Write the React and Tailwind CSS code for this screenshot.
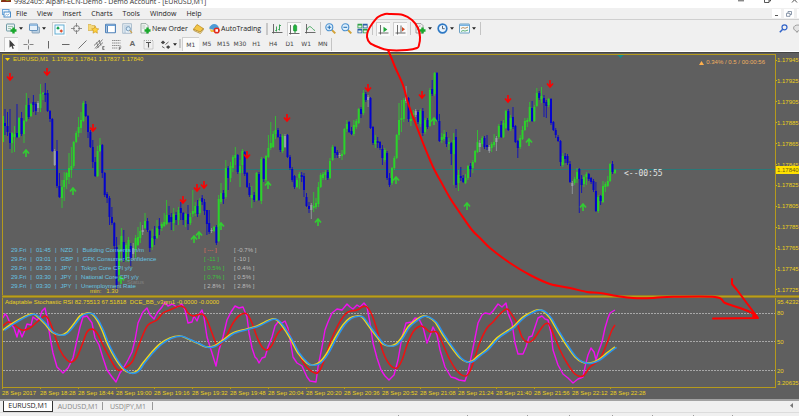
import { Fragment } from "react";
import clsx from "clsx";

const menus = ["File", "View", "Insert", "Charts", "Tools", "Window", "Help"];
const timeframes = ["M1", "M5", "M15", "M30", "H1", "H4", "D1", "W1", "MN"];
const tabs = ["EURUSD,M1", "AUDUSD,M1", "USDJPY,M1"];

const prices = [
  "1.17945", "1.17925", "1.17905", "1.17885", "1.17865", "1.17845",
  "1.17825", "1.17805", "1.17785", "1.17765", "1.17745", "1.17725",
];

const times = [
  "2017", "18:28", "18:44", "19:00", "19:16", "19:32", "19:48", "20:04", "20:20",
  "20:36", "20:52", "21:08", "21:24", "21:40", "21:56", "22:12", "22:28",
];

const news = [
  { time: "01:45", currency: "NZD", title: "Building Consents m/m", actual: "[ --- ]", previous: "[ -0.7% ]", tone: "text-[#e5705a]" },
  { time: "03:01", currency: "GBP", title: "GFK Consumer Confidence", actual: "[ -11 ]", previous: "[ -10 ]", tone: "text-[#3cc43c]" },
  { time: "03:30", currency: "JPY", title: "Tokyo Core CPI y/y", actual: "[ 0.5% ]", previous: "[ 0.4% ]", tone: "text-[#3cc43c]" },
  { time: "03:30", currency: "JPY", title: "National Core CPI y/y", actual: "[ 0.7% ]", previous: "[ 0.5% ]", tone: "text-[#3cc43c]" },
  { time: "03:30", currency: "JPY", title: "Unemployment Rate", actual: "[ 2.8% ]", previous: "[ 2.8% ]", tone: "text-[#bcbcbc]" },
];

// x high top bottom low colour (g = up, b = down, w = doji)
const candleData = `
3 116 116 142 142 g|5 109 123 126 135 b|7.5 112 126 132 136 b|10 109 133 143 149 b|12 132 133 143 153 g|14.5 126 134 137 152 g
17 104 133 137 138 b|19 117 118 137 138 g|21.6 112 118 134 136 b|24 120 121 134 143 g|26.3 93 105 121 122 g|28.7 98 105 117 119 b
31 103 104 116 117 g|33.4 95 102 105 112 b|35.8 102 104 111 115 b|38 101 103 108 112 w|40.5 84 94 108 112 g|43 92 93 94 100 g
45.3 83 93 95 102 b|47.6 90 93 111 112 b|50 110 111 119 122 b|52.3 118 119 151 152 b|54.7 149 151 165 166 w|57 140 151 186 188 b
59.4 173 186 197 198 b|62 180 187 198 208 g|64.2 172 180 187 201 g|66.6 172 173 180 189 g|69 153 168 177 184 g|71.4 147 166 170 178 g
73.7 141 142 166 168 g|76.2 131 133 142 143 g|78.6 117 127 133 137 g|81 112 120 128 133 g|83.3 101 103 121 122 g|85.7 101 104 116 117 b
88 115 116 132 138 b|90.4 130 132 147 148 b|92.8 140 147 162 168 b|95.2 157 162 176 177 b|97.6 146 151 176 177 g|100 138 145 151 152 g
102.3 144 145 173 178 b|104.7 172 173 195 197 b|107.1 192 194 198 203 b|109.5 196 198 217 225 b|111.9 207 217 223 225 b|114.3 222 223 246 250 b
116.6 237 247 285 290 b|119 245 250 275 282 g|121.4 228 236 250 262 g|123.8 230 242 260 262 b|126.1 243 245 260 262 g|128.5 237 240 252 262 g
130.8 243 246 258 266 b|133.2 243 248 254 260 w|135.6 235 238 250 258 g|138 227 237 245 246 g|140.3 222 231 238 243 g|142.7 225 230 232 235 w
145 213 221 228 229 g|147.5 218 221 230 232 b|149.8 230 231 248 252 b|152.2 229 238 247 250 g|154.6 226 236 239 245 b|157 220 228 238 239 g
159.4 218 226 229 235 b|161.8 222 224 228 231 g|164.2 213 222 226 227 g|166.6 200 215 224 225 g|169 206 215 222 223 b|171.3 213 217 222 230 b
173.7 208 214 223 231 g|176.1 212 215 220 225 b|178.5 207 210 220 225 g|180.8 202 208 213 220 b|183.2 212 213 220 225 b|185.6 213 214 220 227 g
188 205 214 224 230 b|190.4 213 217 223 225 g|192.8 190 211 214 217 g|195.2 202 206 213 216 g|197.5 200 206 214 217 b|199.8 198 201 213 215 g
202.2 195 198 202 205 b|204.5 199 202 211 215 b|206.9 210 210 224 235 b|209.2 210 223 232 234 b|211.6 228 230 231 233 w|214 226 227 231 232 g
216.4 225 227 243 245 b|218.7 195 199 241 242 g|221 183 193 202 204 g|223.4 190 193 199 204 b|225.8 160 168 197 199 g|228.2 166 168 178 190 b
230.5 162 166 178 182 g|232.9 155 157 168 172 g|235.3 147 155 158 165 g|237.7 154 155 172 174 b|240 160 166 173 187 g|242.4 149 151 165 173 g
244.7 151 152 174 176 b|247.1 172 173 187 188 b|249.4 183 187 195 197 b|251.8 186 195 198 208 g|254.2 192 195 200 202 b|256.5 172 173 200 201 g
259 172 174 200 201 b|261.3 157 159 201 204 g|263.7 158 159 179 182 b|266 155 156 180 182 g|268.4 135 148 157 158 g|270.8 122 143 148 150 g
273.2 131 134 147 148 g|275.5 116 130 134 139 g|278 128 130 137 138 b|280.3 134 137 150 152 b|282.7 134 136 151 153 g|285 134 136 147 148 w
287.5 134 135 157 158 b|290 155 157 168 170 b|292.2 167 169 180 182 b|294.5 175 176 187 189 b|297 178 180 187 188 g|299.3 172 174 178 189 g
301.7 172 175 177 182 b|304 173 176 190 197 b|306.5 193 197 206 207 b|309 202 206 209 213 b|311.3 203 205 210 219 w|313.7 192 206 208 212 g
316 198 203 207 209 g|318.4 182 187 204 207 g|320.7 173 175 187 188 g|323 172 174 178 180 g|325.4 170 172 175 180 g|327.8 170 172 178 180 b
330 158 161 178 179 g|332.6 145 147 160 161 g|335 146 147 153 158 b|337.3 150 152 155 158 b|339.7 153 155 156 158 w|342 150 154 156 160 g
344.4 128 129 154 155 g|346.8 120 124 129 132 g|349.1 121 122 132 133 b|351.5 127 131 134 135 b|353.9 120 125 134 136 g|356.3 119 121 127 129 g
358.7 108 109 123 124 g|361 107 109 114 118 b|363.4 90 93 113 115 g|365.8 92 94 100 102 b|368.1 95 97 100 107 w|370.5 97 98 128 129 b
373 126 127 143 145 b|375.3 135 140 144 148 g|377.7 137 141 143 148 b|380 141 142 148 150 b|382.4 145 149 158 165 b|384.8 148 150 160 162 g
387.1 151 153 178 180 b|389.5 173 178 185 187 b|392 167 168 183 185 g|394.3 156 158 168 170 g|396.7 134 135 158 159 g|399 103 120 135 140 g
401.4 100 118 120 132 g|403.8 98 100 119 122 g|406.1 86 97 101 103 w|408.5 97 98 119 122 b|410.9 112 119 121 126 g|413.3 110 113 117 120 g
415.7 109 111 115 117 w|418 110 112 122 124 b|420.4 109 111 124 127 g|422.8 108 111 133 136 b|425.1 118 120 132 134 g|427.5 118 120 127 129 b
429.9 88 90 126 127 g|432.2 80 89 94 96 b|434.6 72 73 94 96 g|437 72 73 121 122 b|439.4 114 121 141 142 b|441.8 133 137 140 143 g
444.1 130 134 139 141 g|446.5 132 137 144 147 b|448.9 138 142 144 150 g|451.3 142 143 154 165 b|453.7 133 140 154 185 g|456 129 137 185 188 b
458.5 170 175 183 191 g|460.8 167 176 178 181 b|463.2 175 178 182 183 b|465.5 174 178 183 184 g|468 165 166 178 180 g|470.4 163 166 169 177 b
472.8 160 162 168 173 g|475.1 150 151 162 163 g|477.5 130 142 152 153 g|479.8 140 143 147 152 w|482.2 136 138 144 147 g|484.5 136 138 147 149 b
487 135 145 147 150 b|489.3 145 147 151 153 w|491.7 142 144 148 152 g|494.1 134 142 145 147 g|496.4 136 138 142 151 w|498.8 124 126 137 139 g
501.2 121 125 137 138 b|503.5 120 123 137 138 g|505.9 110 111 128 129 g|508.3 109 111 130 131 b|510.7 115 118 129 131 g|513 107 117 127 129 b
515.4 125 126 142 143 b|517.8 140 141 148 158 b|520.2 135 138 147 149 g|522.5 126 130 139 140 g|524.9 118 121 130 131 g|527.3 118 120 122 127 g
529.7 102 107 121 122 g|532.1 101 108 121 122 b|534.4 105 107 121 122 g|536.8 88 93 106 107 g|539.2 91 93 98 100 b|541.5 87 96 99 103 g
544 95 98 103 117 b|546.3 100 102 106 118 b|548.6 98 99 105 107 g|551 98 99 123 125 b|553.4 121 122 130 131 b|555.7 128 130 135 138 b
558.1 135 137 141 142 b|560.5 140 141 162 166 b|562.8 153 156 165 167 g|565.2 153 156 159 163 b|567.5 154 156 163 165 b|570 161 164 182 183 b
572.3 181 183 186 194 w|574.6 177 179 183 185 g|577 168 172 179 183 g|579.3 168 169 179 213 b|581.6 175 179 185 193 b|584 175 177 184 187 g
586.4 172 174 177 185 g|588.8 173 174 179 181 b|591.1 177 178 182 184 b|593.5 179 181 190 192 b|595.9 182 191 211 212 b|598.2 195 197 211 213 g
600.6 195 196 201 205 b|603 181 186 202 203 g|605.4 182 184 187 192 g|607.8 176 181 186 187 g|610.1 163 164 181 182 g|612.5 161 164 172 174 b
615 169 170 173 174 g`;

const candles = candleData
  .trim()
  .split(/[|\n]/)
  .map((row) => {
    const [x, high, top, bottom, low, kind] = row.split(" ");
    return { x: +x, high: +high, top: +top, bottom: +bottom, low: +low, kind };
  });

const candleColors = { g: "#2bd32b", b: "#0404cc", w: "#9aa0a8" };

const sellSignals = [[10, 77], [47, 72], [93, 128], [183, 200], [197, 188], [204, 185], [247, 155], [287, 118], [368, 88], [422, 95], [508, 99], [550, 84]];
const buySignals = [[26, 153], [73, 191], [121, 280], [194, 239], [199, 235], [221, 226], [268, 185], [318, 222], [396, 180], [434, 121], [467, 206], [529, 142], [583, 207]];

const slowLine = "3,330 10,325 20,319 28,315 33,314 38,317 45,324 52,332 60,335 66,333 73,325 80,316 87,313 92,314 97,320 102,330 108,345 115,358 123,369 130,373 137,371 143,363 152,352 160,344 170,338 180,336 188,339 197,343 206,347 214,346 223,340 233,333 247,329 257,326 265,322 272,319 277,320 283,327 290,338 298,353 307,363 313,365 320,362 327,353 335,338 343,325 350,318 357,316 362,317 368,325 377,337 383,344 390,346 396,344 402,337 408,327 416,320 423,316 428,317 435,322 443,335 452,348 460,358 467,362 472,361 478,356 487,349 497,338 507,331 513,327 522,318 530,313 537,310 543,311 550,318 557,330 567,346 575,357 582,362 590,363 598,360 607,353 615,347";
const signalLine = "3,326 8,322 13,324 22,330 30,328 37,322 45,316 49,320 53,330 60,350 67,360 72,362 77,357 82,345 87,332 92,329 97,333 103,345 112,362 118,370 125,368 132,362 137,350 142,337 148,325 157,320 163,313 172,309 180,306 185,308 188,313 193,316 202,314 207,320 212,333 217,345 222,343 227,335 233,323 240,315 247,314 252,323 257,337 262,347 267,350 272,345 278,333 285,328 290,335 297,350 305,365 315,373 320,370 325,358 330,343 337,327 343,317 348,312 357,310 362,307 367,307 372,315 377,330 383,352 390,365 397,368 402,360 407,345 413,332 420,326 425,328 430,332 437,332 442,342 450,360 458,372 466,376 471,369 475,357 480,342 487,328 493,322 500,314 507,309 512,315 517,323 522,337 527,342 533,340 540,330 545,324 549,324 553,333 560,350 567,363 575,374 583,376 590,367 597,362 602,355 607,343 612,330 615,325";
const fastLine = "3,318 5,314 7,316 10,323 12,325 14,328 17,337 19,329 22,337 25,330 27,324 31,325 33,317 37,320 40,317 42,311 45,308 47,317 50,337 53,353 57,367 63,373 68,368 73,358 77,340 80,327 83,317 87,316 92,323 95,338 99,345 103,358 107,370 112,377 116,382 120,373 124,367 128,360 132,352 135,340 138,323 143,312 147,308 150,315 154,319 157,313 162,307 165,302 168,306 172,304 177,307 182,304 185,310 188,323 192,322 194,316 197,321 200,313 202,310 204,317 207,337 212,353 216,366 219,350 223,337 227,320 231,312 235,306 239,308 243,307 247,317 249,333 252,348 255,357 257,359 259,363 262,358 265,357 268,347 272,337 275,326 278,322 282,323 285,321 288,328 291,345 293,357 297,363 302,366 307,377 310,381 316,382 318,367 322,347 325,330 328,322 332,313 337,309 342,310 347,304 350,307 353,309 357,305 360,307 364,303 367,307 370,323 373,343 377,358 381,370 385,376 389,380 394,375 398,360 402,337 406,323 412,322 415,318 419,319 423,327 427,343 431,333 433,327 437,335 440,350 445,367 451,377 455,378 459,380 465,381 468,372 472,353 475,338 478,323 482,315 485,313 490,314 493,311 498,304 502,307 506,303 508,313 512,323 515,343 518,354 523,354 526,347 529,337 532,336 535,327 538,318 542,316 545,319 548,320 551,333 553,350 558,365 563,374 568,378 573,383 578,379 583,377 585,367 588,355 591,348 594,352 596,360 598,353 602,342 605,328 608,318 610,313 615,310";

// Catmull-Rom spline through the points
const smooth = (points) => {
  const p = points.split(" ").map((pair) => pair.split(",").map(Number));
  let d = `M${p[0].join(",")}`;
  for (let i = 0; i < p.length - 1; i++) {
    const a = p[i - 1] || p[i];
    const b = p[i];
    const c = p[i + 1];
    const e = p[i + 2] || c;
    d += `C${b[0] + (c[0] - a[0]) / 6},${b[1] + (c[1] - a[1]) / 6} ${c[0] - (e[0] - b[0]) / 6},${c[1] - (e[1] - b[1]) / 6} ${c[0]},${c[1]}`;
  }
  return d;
};

/* ---------- icons ---------- */

const Icon = ({ children, size = 11 }) => (
  <svg width={size} height={size} viewBox="0 0 11 11" fill="none" className="shrink-0">
    {children}
  </svg>
);

const plus = <path d="M7.5 4.5v6M4.5 7.5h6" stroke="#19a82c" strokeWidth="2.4" />;

const icons = {
  newChart: (
    <Icon>
      <rect x=".5" y="1" width="8" height="7" rx=".5" fill="#eaf3f4" stroke="#6f9aa5" />
      <path d="M2 3.5h5M2 5.5h3" stroke="#8fb6a0" strokeWidth=".8" />
      {plus}
    </Icon>
  ),
  profiles: (
    <Icon>
      <rect x="3" y="4" width="7.5" height="6" rx=".5" fill="#b9cfe2" stroke="#7f9ab3" strokeWidth=".8" />
      <rect x=".5" y="1" width="8" height="6.5" rx=".5" fill="#e7f1fa" stroke="#5b8bb8" strokeWidth=".9" />
      <path d="M1 2.2h7" stroke="#7eb0de" strokeWidth="1.2" />
    </Icon>
  ),
  market: (
    <Icon>
      <rect x="1" y="1" width="9" height="9" fill="#f4fbff" stroke="#58a8d0" strokeWidth=".9" />
      <path d="M2.2 4.2l1.8-2 1.8 2-1.8 1.6z" fill="#17a24a" />
      <path d="M5.5 7l1.8-1.8L9 7 7.3 8.8z" fill="#e0502d" />
    </Icon>
  ),
  navigator: (
    <Icon>
      <circle cx="5.5" cy="5.5" r="3" stroke="#777" strokeWidth=".9" />
      <path d="M5.5 0v4M5.5 7v4M0 5.5h4M7 5.5h4" stroke="#777" strokeWidth=".8" />
    </Icon>
  ),
  favorites: (
    <Icon>
      <path d="M0 1.500h3l1 1h3v5H0z" fill="#f5d97a" stroke="#cfa640" strokeWidth=".6" />
      <path d="M7.2 3.2l1.1 2.3 2.5.4-1.8 1.7.4 2.6-2.2-1.300L5 10.200l.4-2.6-1.8-1.7 2.500-.4z" fill="#ffd23c" stroke="#c8901d" strokeWidth=".6" />
    </Icon>
  ),
  terminal: (
    <Icon>
      <rect x=".6" y="1.3" width="9.8" height="8.5" rx=".5" fill="#fff" stroke="#4d80b8" strokeWidth="1.1" />
      <path d="M1 2.5h9" stroke="#6ea3d8" />
      <path d="M2.3 3v6.5" stroke="#4d80b8" strokeWidth="1.3" />
    </Icon>
  ),
  tester: (
    <Icon>
      <rect x=".8" y=".8" width="8.5" height="9.4" fill="#eef4f8" stroke="#93abc0" strokeWidth=".8" />
      <path d="M2 3h6M2 5h3M2 7h2M2 9h2" stroke="#86a8c6" strokeWidth=".7" />
      <circle cx="6.3" cy="5.8" r="2.1" fill="#d7ecfa" stroke="#6d92b4" strokeWidth=".9" />
      <path d="M7.8 7.4l2.2 2.6" stroke="#c9a254" strokeWidth="1.3" />
    </Icon>
  ),
  newOrder: (
    <Icon>
      <path d="M1 .6h5l2 2v7.4H1z" fill="#f2f6f4" stroke="#879b92" strokeWidth=".8" />
      <path d="M2.3 3h3M2.3 5h3" stroke="#9cb3a8" strokeWidth=".7" />
      {plus}
    </Icon>
  ),
  editor: (
    <Icon>
      <path d="M.5 6.3L4 1.5l6.3 4L7.2 9.8z" fill="#f3c648" stroke="#b98719" strokeWidth=".7" />
      <path d="M.5 6.3l.3 1.2 6.6 3 3.1-4-.2-1L7.2 9z" fill="#fff3c4" stroke="#a87c20" strokeWidth=".7" />
    </Icon>
  ),
  auto: (
    <Icon>
      <path d="M0 5.6C1 2.5 3 1 5.2 1s4 1.5 5 4.2L5 7z" fill="#4d9bd6" />
      <path d="M.3 5.5c1.5 1.8 6 2 9.3 0L8 9H2z" fill="#f0c040" />
      <circle cx="7.7" cy="7.5" r="3.1" fill="#e02a1e" />
      <rect x="6.4" y="6.2" width="2.6" height="2.6" fill="#fff" />
    </Icon>
  ),
  bars: (
    <Icon>
      <path d="M1.5 1v9.5M0 9.5h10.5" stroke="#5c5c5c" strokeWidth=".9" />
      <path d="M4.5 3.5v5M3.3 7.5h1.2M7.5 1.5v6M7.5 2.5H9M6.3 6.5h1.2" stroke="#2a9c48" strokeWidth=".9" />
    </Icon>
  ),
  candle: (
    <Icon>
      <path d="M1.5 1v9.5M0 9.5h10.5" stroke="#5c5c5c" strokeWidth=".9" />
      <path d="M6 0v9" stroke="#168a2e" strokeWidth=".9" />
      <rect x="4.5" y="1.5" width="3.2" height="5.5" rx=".6" fill="#20b53c" stroke="#168a2e" strokeWidth=".6" />
    </Icon>
  ),
  line: (
    <Icon>
      <path d="M1.5 1v9.5M0 9.5h10.5" stroke="#5c5c5c" strokeWidth=".9" />
      <path d="M2 7c1-3.500 3-4 4.500-2.500S8.500 7 10 7.500" stroke="#43a85c" />
    </Icon>
  ),
  zoomIn: (
    <Icon>
      <path d="M6.8 6.8l3.5 3.6" stroke="#d2a238" strokeWidth="1.9" />
      <circle cx="4.3" cy="4.3" r="3.5" fill="#dff0fc" stroke="#4a90cf" strokeWidth="1.1" />
      <path d="M2.4 4.3h3.8M4.3 2.4v3.8" stroke="#2b74b8" strokeWidth="1.1" />
    </Icon>
  ),
  zoomOut: (
    <Icon>
      <path d="M6.8 6.8l3.5 3.6" stroke="#d2a238" strokeWidth="1.9" />
      <circle cx="4.3" cy="4.3" r="3.5" fill="#dff0fc" stroke="#4a90cf" strokeWidth="1.1" />
      <path d="M2.4 4.3h3.8" stroke="#2b74b8" strokeWidth="1.1" />
    </Icon>
  ),
  tile: (
    <Icon>
      <path d="M.5.8h4.8v4.4H.5zM5.8 5.8h4.8v4.4H5.8z" fill="#2fa044" />
      <path d="M5.8.8h4.8v4.4H5.8zM.5 5.8h4.8v4.4H.5z" fill="#2b5fa8" />
      <path d="M1.3 2.5h3.2v1.9H1.3zM6.6 2.5h3.2v1.9H6.6zM1.3 7.5h3.2v1.9H1.3zM6.6 7.5h3.2v1.9H6.6z" fill="#e8f4ea" />
    </Icon>
  ),
  autoScroll: (
    <Icon>
      <path d="M2.5 1v9.5M.5 9h10" stroke="#5c5c5c" strokeWidth=".9" />
      <path d="M5.5 2.8v5.4l3.800-2.700z" fill="#1fa83a" />
    </Icon>
  ),
  chartShift: (
    <Icon>
      <path d="M2.5 1v9.5M.5 9h10M6 1.500v7" stroke="#5c5c5c" strokeWidth=".9" />
      <path d="M7 3v4.5L10 5.300z" fill="#d4461f" />
    </Icon>
  ),
  indicators: (
    <Icon>
      <path d="M1 .6h5l2 2v7.4H1z" fill="#f2f2f2" stroke="#8b8b8b" strokeWidth=".8" />
      <path d="M2.5 7c1-4 2-4 3-4" stroke="#888" strokeWidth=".8" />
      {plus}
    </Icon>
  ),
  clock: (
    <Icon>
      <circle cx="5.5" cy="5.5" r="4.3" fill="#eaf5ff" stroke="#2d78c4" strokeWidth="1.7" />
      <path d="M5.5 2.8v2.9h2.2" stroke="#345" strokeWidth=".8" />
    </Icon>
  ),
  template: (
    <Icon>
      <rect x=".5" y="1" width="10" height="9" rx=".5" fill="#f3fafd" stroke="#5c96bd" strokeWidth=".9" />
      <path d="M1 2.2h9" stroke="#6aaade" strokeWidth="1.4" />
      <path d="M2 5.5l2-1 2 .8 3-1.2" stroke="#b0783c" strokeWidth=".8" />
      <path d="M2 8.5l2-1 2 .6 3-1" stroke="#3da056" strokeWidth=".8" />
    </Icon>
  ),
  cursor: (
    <Icon>
      <path d="M3.5.8v8l1.9-1.7 1.2 3 1.3-.6-1.2-2.8h2.5z" fill="#3e3e3e" />
    </Icon>
  ),
  crosshair: (
    <Icon>
      <path d="M5.5.5v4M5.5 6.5v4M.5 5.5h4M6.5 5.5h4" stroke="#777" strokeWidth=".9" />
    </Icon>
  ),
  vline: <Icon><path d="M5.5 2v7.5" stroke="#666" /></Icon>,
  hline: <Icon><path d="M2 5.5h7.5" stroke="#666" /></Icon>,
  trend: <Icon><path d="M1.5 9.5l8-8" stroke="#666" strokeWidth=".9" /></Icon>,
  channel: (
    <Icon>
      <path d="M0 6.5l6-5.5M2.5 9.5l6.5-6M1 9.5L8.5.5M2.5 3.5l2 5M5 1.5l2 5" stroke="#666" strokeWidth=".8" />
      <path d="M10.5 7.5H8.7v3h1.8M8.7 9h1.5" stroke="#555" strokeWidth=".7" />
    </Icon>
  ),
  fibo: (
    <Icon>
      <path d="M1 1.5h8.5M1 4h8.5M1 6.5h8.5M1 9h5.5" stroke="#777" strokeWidth=".8" strokeDasharray="1.5 .4" />
      <path d="M10.3 8h-2v3M8.3 9.4h1.6" stroke="#555" strokeWidth=".7" />
    </Icon>
  ),
  label: (
    <Icon>
      <rect x="1" y="1.5" width="9" height="8.5" stroke="#999" strokeWidth=".8" strokeDasharray="1 1" />
      <path d="M3 3.5h5M5.5 3.5v5" stroke="#555" strokeWidth="1.1" />
    </Icon>
  ),
  arrows: (
    <Icon>
      <path d="M.8 3.5l2.2-2 2.2 2L3 5.3zM6 8l2.2-1.8L10.3 8l-2.1 2z" fill="#444" />
      <path d="M5.5 5.5l3-2.500M2 7.5l2.5 1.5" stroke="#555" strokeWidth=".9" />
    </Icon>
  ),
};

const Caret = () => (
  <svg width="4" height="3" viewBox="0 0 4 3" className="ml-[2px] shrink-0">
    <path d="M0 .3h4L2 2.8z" fill="#222" />
  </svg>
);

const Tool = ({ icon, label, menu, pressed, children }) => (
  <button
    type="button"
    aria-label={label}
    aria-pressed={pressed}
    className={clsx(
      "flex h-[14px] items-center justify-center px-px",
      pressed && "border-t border-l border-[#cfcfcf] bg-[#fafafa]"
    )}
  >
    {icons[icon]}
    {children}
    {menu && <Caret />}
  </button>
);

const Divider = () => <span className="h-[13px] w-px bg-[#c4c4c4]" />;
const Grip = () => <span className="h-[12px] w-[2px] border-x border-[#c8c8c8]" />;

const TitleBar = () => (
  <header className="flex h-2 items-end justify-between overflow-hidden bg-white pl-px">
    <div className="flex items-end">
      <svg width="10" height="6" viewBox="0 0 10 6" className="self-start">
        <path d="M0 0h10v6H0z" fill="#2c4a16" />
        <path d="M0 4l3-3 2 3 2-3 3 2v3H0z" fill="#7a9a28" />
        <path d="M0 5l3-2 3 2 4-1v2H0z" fill="#8a2f14" />
      </svg>
      <h1 className="ml-[3px] text-[7px] leading-[12px] whitespace-pre text-[#333]">9982405: Alpari-ECN-Demo - Demo Account - [EURUSD,M1]</h1>
    </div>
    <svg width="62" height="8" viewBox="0 0 62 8" fill="none" stroke="#444" strokeWidth=".9" className="shrink-0">
      <path d="M1 .8h6M27.5-2v4.5H32V-2M29-2M33.5-2v3H32M55-3l5 5.500M60-3l-5 5.500" />
    </svg>
  </header>
);

const MenuBar = () => (
  <nav className="flex h-3 items-center border-b border-[#cfcfcf] pl-[2px]">
    <svg width="9" height="9" viewBox="0 0 9 9" fill="none" className="mr-[5px]">
      <rect x=".5" y=".5" width="6.5" height="5" fill="#e8f3fc" stroke="#6ca6d8" />
      <rect x="2" y="3" width="6.5" height="5" fill="#fff" stroke="#4a8cc8" />
      <path d="M3 6.8l1.500-1.600 1.300 1 1.600-1.700" stroke="#6a9ecb" strokeWidth=".8" />
    </svg>
    <div className="flex gap-[10px]">
      {menus.map((menu) => (
        <button key={menu} type="button" className="leading-[10px]">{menu}</button>
      ))}
    </div>
    <div className="ml-auto flex gap-[3px]">
      <button type="button" aria-label="Minimize chart" className="flex h-[9px] w-[9px] items-end justify-center bg-white pb-[2px]">
        <span className="h-px w-[3px] bg-[#555]" />
      </button>
      <button type="button" aria-label="Restore chart" className="flex h-[9px] w-[10px] items-center justify-center bg-white">
        <svg width="6" height="6" viewBox="0 0 6 6" fill="none" stroke="#6f7f96" strokeWidth=".8">
          <path d="M2 2V.5h3.5v3H4M.5 2.3H4v3H.5z" />
        </svg>
      </button>
      <span className="h-[9px] w-[2px] bg-white" />
    </div>
  </nav>
);

const MainToolbar = () => (
  <div role="toolbar" aria-label="Standard" className="flex h-[17px] items-center overflow-hidden">
    <div className="flex items-center gap-1 pl-[5px]">
      <Tool icon="newChart" label="New chart" menu />
      <Tool icon="profiles" label="Profiles" menu />
    </div>
    <span className="ml-[2px]"><Divider /></span>
    <div className="ml-[3px] flex items-center gap-1">
      <Tool icon="market" label="Market Watch" pressed />
      <Tool icon="navigator" label="Data Window" />
      <Tool icon="favorites" label="Navigator" />
      <Tool icon="terminal" label="Terminal" />
      <Tool icon="tester" label="Strategy Tester" />
    </div>
    <span className="ml-1"><Divider /></span>
    <span className="ml-px"><Tool icon="newOrder" label="New Order"><span className="ml-px w-[35px] text-left whitespace-nowrap">New Order</span></Tool></span>
    <span className="ml-1"><Tool icon="editor" label="MetaEditor" /></span>
    <span className="ml-[3px]"><Tool icon="auto" label="AutoTrading"><span className="ml-px">AutoTrading</span></Tool></span>
    <div className="ml-1 flex items-center gap-[3px]">
      <Grip />
      <Tool icon="bars" label="Bar Chart" />
      <Tool icon="candle" label="Candlesticks" pressed />
      <Tool icon="line" label="Line Chart" />
      <Divider />
      <Tool icon="zoomIn" label="Zoom In" />
      <Tool icon="zoomOut" label="Zoom Out" />
      <Tool icon="tile" label="Tile Windows" />
      <Divider />
      <Tool icon="autoScroll" label="Auto Scroll" pressed />
      <Tool icon="chartShift" label="Chart Shift" pressed />
      <Divider />
      <Tool icon="indicators" label="Indicators" menu />
      <Tool icon="clock" label="Periods" menu />
      <Tool icon="template" label="Templates" menu />
      <Divider />
    </div>
    <div className="ml-auto flex items-center gap-[5px]">
      <button type="button" aria-label="Search">
        <svg width="9" height="9" viewBox="0 0 9 9" fill="none" stroke="#2f62c8">
          <circle cx="5.5" cy="3.3" r="2.5" strokeWidth="1.2" />
          <path d="M3.7 5.2L.8 8.3" strokeWidth="1.5" />
        </svg>
      </button>
      <button type="button" aria-label="Chat" className="w-[6px] overflow-hidden">
        <svg width="10" height="9" viewBox="0 0 10 9" fill="#e4e4e4" stroke="#8d8d8d" strokeWidth=".8" className="max-w-none">
          <path d="M5 1C2.5 1 .6 2.2.6 4S2 6.5 3 6.8L4 8.5l.8-1.6C8 6.8 9.4 5.5 9.4 4S7.5 1 5 1z" />
        </svg>
      </button>
    </div>
  </div>
);

const DrawToolbar = () => (
  <div role="toolbar" aria-label="Line studies" className="flex h-[15px] items-center overflow-hidden border-b border-white">
    <div className="flex items-center gap-1 pl-1">
      <Tool icon="cursor" label="Cursor" pressed />
      <Tool icon="crosshair" label="Crosshair" />
    </div>
    <span className="ml-[2px]"><Divider /></span>
    <div className="ml-[5px] flex items-center gap-1">
      <Tool icon="vline" label="Vertical Line" />
      <Tool icon="hline" label="Horizontal Line" />
      <Tool icon="trend" label="Trendline" />
      <Tool icon="channel" label="Equidistant Channel" />
      <Tool icon="fibo" label="Fibonacci Retracement" />
      <button type="button" className="w-[11px] font-['Liberation_Sans'] text-[8px] font-bold text-[#666]">A</button>
      <Tool icon="label" label="Text Label" />
      <Tool icon="arrows" label="Arrows" menu />
    </div>
    <span className="mx-px"><Grip /></span>
    <div className="grid w-[149px] grid-cols-9 font-['DejaVu_Sans'] text-[6px] text-[#444]">
      {timeframes.map((frame, i) => (
        <button
          key={frame}
          type="button"
          aria-pressed={i === 0}
          className={clsx("h-[14px] text-center", i === 0 && "border-t border-l border-[#cfcfcf] bg-[#fafafa]")}
        >
          {frame}
        </button>
      ))}
    </div>
    <Divider />
  </div>
);

/* ---------- chart ---------- */

const PricePlot = () => (
  <svg aria-hidden="true" className="absolute inset-0 h-full w-full">
    <path d="M614 0h7l-3.5 3z" fill="#118a8a" />
    <rect y="114" width="100%" height="1" fill="#2a7878" />
    <g transform="translate(-3 -55)">
      {candles.map(({ x, high, top, bottom, low, kind }) => (
        <g key={x} fill={candleColors[kind]}>
          <rect x={x - 0.5} y={high} width="1" height={low - high} opacity=".8" />
          <rect x={x - 1} y={top} width="2" height={Math.max(bottom - top, 1)} />
        </g>
      ))}
      {sellSignals.map(([x, y]) => (
        <path key={x} d={`M${x} ${y - 4}v7M${x - 3} ${y - 0.5}l3 3.500 3-3.500`} fill="none" stroke="#ff0000" strokeWidth="1.600" />
      ))}
      {buySignals.map(([x, y]) => (
        <path key={x} d={`M${x} ${y + 4}v-7M${x - 3} ${y + 0.5}l3-3.500 3 3.500`} fill="none" stroke="#32cd32" strokeWidth="1.600" />
      ))}
    </g>
  </svg>
);

const News = () => (
  <table className="absolute top-[191px] left-2 text-[#66c4e2]">
    <tbody>
      {news.map((item) => (
        <tr key={item.title} className="h-[9px] leading-[9px] whitespace-nowrap">
          <td className="w-[193px] p-0">
            <div className="flex gap-1">
              {["29.Fri", item.time, item.currency].map((part) => (
                <Fragment key={part}>
                  <span>{part}</span>
                  <span>|</span>
                </Fragment>
              ))}
              <span>{item.title}</span>
            </div>
          </td>
          <td className={clsx("w-[30px] p-0", item.tone)}>{item.actual}</td>
          <td className="p-0 text-[#bcbcbc]">{item.previous}</td>
        </tr>
      ))}
    </tbody>
  </table>
);

const PricePane = () => (
  <div className="flex min-h-0 flex-1">
    <div className="relative flex-1 overflow-hidden border-x border-t border-[#b59a1c]">
      <PricePlot />
      <p className="absolute top-0 left-[2px] flex items-center gap-[3px] leading-[9px] whitespace-pre">
        <svg width="5" height="3" viewBox="0 0 5 3"><path d="M0 0h5L2.5 3z" fill="#ffd700" /></svg>
        {"EURUSD,M1  1.17838 1.17841 1.17837 1.17840"}
      </p>
      <p className="absolute top-[3px] right-[10px] flex items-center gap-[2px] leading-[9px] text-[#f0b060]">
        <svg width="5" height="4" viewBox="0 0 5 4"><path d="M0 4h5L2.5 0z" fill="#ffb04c" /></svg>
        0.34% / 0.5 / 00:00:56
      </p>
      <p className="absolute top-[114px] left-[621px] font-['DejaVu_Sans_Mono'] text-[8px] leading-[10px] text-[#e2e2e2]">&lt;--00:55</p>
      <p className="absolute top-[223px] left-[124px] text-[#808080]">Status</p>
      <News />
      <p className="absolute top-[232px] left-[87px] whitespace-pre">min:   1.30</p>
    </div>
    <div className="relative flex w-[23px] flex-col justify-between overflow-hidden pt-[2px] pb-px">
      {prices.map((price) => (
        <span key={price} className="flex h-2 items-center">
          <i className="h-px w-px shrink-0 bg-[#d4b816]" />
          {price}
        </span>
      ))}
      <span className="absolute top-[112px] left-0 h-2 w-full bg-[#ffe100] pl-px text-[#6b5f10]">1.17840</span>
    </div>
  </div>
);

const levels = [15, 43, 72];

const OscillatorPane = () => (
  <div className="flex h-[90px] shrink-0">
    <div className="relative flex-1 overflow-hidden border-x border-b border-[#b59a1c]">
      <svg aria-hidden="true" className="absolute inset-0 h-full w-full" fill="none">
        {levels.map((y) => (
          <line key={y} x1="0" x2="100%" y1={y + 0.5} y2={y + 0.5} stroke="#a8a8a8" strokeDasharray="2 1" />
        ))}
        <g transform="translate(-3 -298)" strokeLinejoin="round">
          <polyline points={fastLine} stroke="#f010f0" strokeWidth="1.4" />
          <path d={smooth(signalLine)} stroke="#f01010" strokeWidth="1.5" />
          <path d={smooth(slowLine)} stroke="#f5d818" strokeWidth="1.7" />
          <path d={smooth(slowLine)} stroke="#2a92ee" strokeWidth="1.6" transform="translate(1.5 .3)" />
        </g>
      </svg>
      <p className="absolute top-0 left-[2px] leading-[9px] whitespace-pre">{"Adaptable Stochastic RSI 82.75513 67.51818  DCE_BB_v3gm1 -0.0000 -0.0000"}</p>
    </div>
    <div className="flex w-[23px] flex-col overflow-hidden pl-px">
      <span className="h-2">95.4232</span>
      <span className="mt-[3px] h-2">80</span>
      <span className="mt-[21px] h-2">50</span>
      <span className="mt-[21px] h-2">20</span>
      <span className="mt-1 h-2">3.20635</span>
    </div>
  </div>
);

const TimeAxis = () => (
  <div className="flex h-[11px] shrink-0 overflow-hidden">
    {times.map((time) => (
      <span key={time} className="w-[38px] shrink-0 whitespace-nowrap">
        <i className="block h-px w-px bg-[#b59a1c]" />
        28 Sep {time}
      </span>
    ))}
  </div>
);

const Chart = () => (
  <main className="flex min-h-0 flex-1 flex-col border-t border-[#444] bg-[#5f5f5f] pt-px pl-[2px] font-['Liberation_Sans'] text-[6px] leading-[8px] text-[#ecd01c]">
    <PricePane />
    <div className="h-[3px] shrink-0 border-y border-[#94822a] bg-[#bb9e1a]" />
    <OscillatorPane />
    <TimeAxis />
  </main>
);

const TabBar = () => (
  <div role="tablist" className="flex h-[13px] shrink-0 items-stretch border-t-2 border-[#a2a2a2] pl-[3px]">
    {tabs.map((tab, i) => (
      <button
        key={tab}
        type="button"
        role="tab"
        aria-selected={i === 0}
        className={clsx(
          "relative flex w-[50px] items-center justify-center",
          i === 0
            ? "border-x border-b border-[#333] bg-white text-[#222]"
            : "text-[#888] after:absolute after:top-px after:right-0 after:h-2 after:w-px after:bg-[#999]"
        )}
      >
        {tab}
      </button>
    ))}
    <svg width="4" height="5" viewBox="0 0 4 5" className="mt-[2px] mr-[5px] ml-auto">
      <path d="M3 0v5L0 2.5z" fill="#777" />
    </svg>
  </div>
);

const StatusBar = () => (
  <footer className="flex h-1 shrink-0 items-end justify-end border-t border-[#dcdcdc]">
    <span className="h-px w-[69px] border-l border-[#999]" />
    <span className="h-px w-[60px] border-l border-[#999]" />
    <span className="h-px w-[42px] border-l border-[#999]" />
    <span className="h-px w-[43px] border-l border-[#999]" />
    <span className="h-px w-[40px] border-l border-[#999]" />
    <span className="h-px w-[41px] border-l border-[#999]" />
    <span className="h-px w-[39px] border-l border-[#999]" />
    <span className="h-px w-[67px] border-l border-[#999]" />
  </footer>
);

// Hand-drawn marker from the toolbar buttons to the chart's right margin
const Marker = () => (
  <svg aria-hidden="true" className="pointer-events-none absolute inset-0 h-full w-full" fill="none" stroke="#ff0000" strokeWidth="2" strokeLinecap="round" strokeLinejoin="round">
    <path d={smooth("390,14 385,14 378,17 372,24 368,31 367,37 370,43 378,47 388,50 407,50 417,48 419,45 420,37 418,28 412,20 403,15 388,14")} />
    <path d={smooth("388,50 391,57 395,67 403,85 408,103 415,122 423,143 430,160 434,169 440,180 450,198 460,213 472,230 481,239 490,248 510,263 530,275 550,284 570,288 587,292 600,293 617,296 633,298 653,298 667,297 715,297 725,303 740,308 752,313 757,317")} />
    <path d="M732 279v5l5 6 6 8 15 20-5-2M713 318.500l45-.5" />
  </svg>
);

export default function App() {
  return (
    <div className="relative flex h-screen flex-col overflow-hidden bg-[#f0f0f0] font-['Open_Sans',sans-serif] text-[7px] leading-[10px] text-[#222]">
      <TitleBar />
      <MenuBar />
      <MainToolbar />
      <DrawToolbar />
      <Chart />
      <TabBar />
      <StatusBar />
      <Marker />
    </div>
  );
}
